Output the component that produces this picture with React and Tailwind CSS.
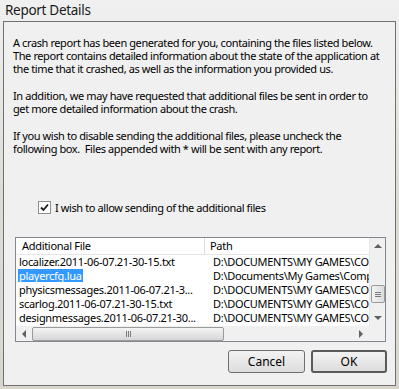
const font = { fontFamily: '"Noto Sans", "Open Sans", sans-serif' };

const Arrow = ({ dir }) => {
  const pts = {
    up: '0,4 4,0 8,4',
    down: '0,0 4,4 8,0',
    left: '4,0 0,4 4,8',
    right: '0,0 4,4 0,8',
  }[dir];
  const vertical = dir === 'up' || dir === 'down';
  return (
    <svg width={vertical ? 8 : 4} height={vertical ? 4 : 8} viewBox={vertical ? '0 0 8 4' : '0 0 4 8'}>
      <polygon points={pts} fill="#606060" />
    </svg>
  );
};

const files = [
  ['localizer.2011-06-07.21-30-15.txt', 'D:\\DOCUMENTS\\MY GAMES\\COMPANY OF HEROES'],
  ['playercfg.lua', 'D:\\Documents\\My Games\\Company of Heroes'],
  ['physicsmessages.2011-06-07.21-3...', 'D:\\DOCUMENTS\\MY GAMES\\COMPANY OF HEROES'],
  ['scarlog.2011-06-07.21-30-15.txt', 'D:\\DOCUMENTS\\MY GAMES\\COMPANY OF HEROES'],
  ['designmessages.2011-06-07.21-30...', 'D:\\DOCUMENTS\\MY GAMES\\COMPANY OF HEROES'],
];

export default function App() {
  return (
    <div
      className="w-[399px] h-[389px] overflow-hidden bg-gradient-to-b from-[#f0f0f0] via-[#dcdcd6] to-[#d8d6cc] text-black"
      style={font}
    >
      <div className="h-[21px] pl-[5px] pt-[1px] text-[13.5px] leading-[18px] text-[#1a1a1a] tracking-[-0.3px]">Report Details</div>

      <div className="mx-[3px] h-[365px] border border-[#707070] bg-[#f0f0f0] flex flex-col text-[11px] tracking-[-0.4px]">
        <div className="pl-[9px] pt-[14px] leading-[13px] whitespace-nowrap">
          <p>A crash report has been generated for you, containing the files listed below.</p>
          <p>The report contains detailed information about the state of the application at</p>
          <p>the time that it crashed, as well as the information you provided us.</p>
          <p className="mt-[14px]">In addition, we may have requested that additional files be sent in order to</p>
          <p>get more detailed information about the crash.</p>
          <p className="mt-[14px]">If you wish to disable sending the additional files, please uncheck the</p>
          <p>following box.&nbsp; Files appended with * will be sent with any report.</p>
        </div>

        <div className="mt-[46px] ml-[34px] flex items-center gap-[4px] h-[13px] leading-[13px]">
          <div className="w-[13px] h-[13px] border border-[#8e8f8f] bg-white flex items-center justify-center">
            <svg width="9" height="9" viewBox="0 0 9 9">
              <polyline points="1,4.5 3.5,7 8,1.5" fill="none" stroke="#1a1a1a" strokeWidth="1.8" />
            </svg>
          </div>
          <span>I wish to allow sending of the additional files</span>
        </div>

        <div className="mt-[23px] ml-[11px] w-[371px] h-[105px] border border-[#828790] bg-white flex flex-col tracking-[-0.3px]">
          <div className="flex h-[88px]">
            <div className="flex-1 min-w-0 flex flex-col">
              <div className="h-[17px] flex border-b border-[#e5e5e5] leading-[16px]">
                <div className="w-[189px] pl-[6px] border-r border-[#dcdcdc]">Additional File</div>
                <div className="flex-1 pl-[5px]">Path</div>
              </div>
              {files.map(([f, p], i) => (
                <div key={f} className="flex h-[14px] leading-[14px] whitespace-nowrap">
                  <div className="w-[189px] pl-[2px] overflow-hidden">
                    <span className={i === 1 ? 'bg-[#3399ff] text-white px-[1px] inline-block leading-[13px]' : 'px-[1px]'}>{f}</span>
                  </div>
                  <div className="flex-1 pl-[8px] overflow-hidden">{p}</div>
                </div>
              ))}
            </div>
            <div className="w-[16px] bg-[#f0f0f0] border-l border-[#e8e8e8] flex flex-col items-center">
              <div className="h-[16px] flex items-center justify-center"><Arrow dir="up" /></div>
              <div className="h-[31px]" />
              <div className="w-[14px] h-[18px] rounded-[2px] border border-[#9a9a9a] bg-gradient-to-r from-[#f4f4f4] to-[#dcdcdc] flex flex-col items-center justify-center gap-[1px]">
                <div className="w-[6px] h-px bg-[#7a7a7a]" />
                <div className="w-[6px] h-px bg-[#7a7a7a]" />
                <div className="w-[6px] h-px bg-[#7a7a7a]" />
              </div>
              <div className="flex-1 flex items-end justify-center pb-[6px]"><Arrow dir="down" /></div>
            </div>
          </div>
          <div className="flex h-[15px] bg-[#f0f0f0]">
            <div className="flex-1 flex items-center">
              <div className="w-[16px] flex justify-center"><Arrow dir="left" /></div>
              <div className="w-[192px] h-[14px] rounded-[2px] border border-[#9a9a9a] bg-gradient-to-b from-[#f4f4f4] to-[#d6d6d6] flex items-center justify-center gap-[1px]">
                <div className="w-px h-[6px] bg-[#7a7a7a]" />
                <div className="w-px h-[6px] bg-[#7a7a7a]" />
                <div className="w-px h-[6px] bg-[#7a7a7a]" />
              </div>
              <div className="flex-1" />
              <div className="w-[16px] flex justify-center"><Arrow dir="right" /></div>
            </div>
            <div className="w-[16px]" />
          </div>
        </div>

        <div className="mt-[8px] mr-[8px] flex justify-end gap-[6px] text-[12px] tracking-normal">
          <button className="w-[77px] h-[23px] rounded-[3px] border border-[#707070] bg-gradient-to-b from-[#f2f2f2] to-[#dddddd]">Cancel</button>
          <button className="w-[76px] h-[23px] rounded-[3px] border-2 border-[#5a5a5a] bg-gradient-to-b from-[#f2f2f2] to-[#dddddd]">OK</button>
        </div>
      </div>
    </div>
  );
}
